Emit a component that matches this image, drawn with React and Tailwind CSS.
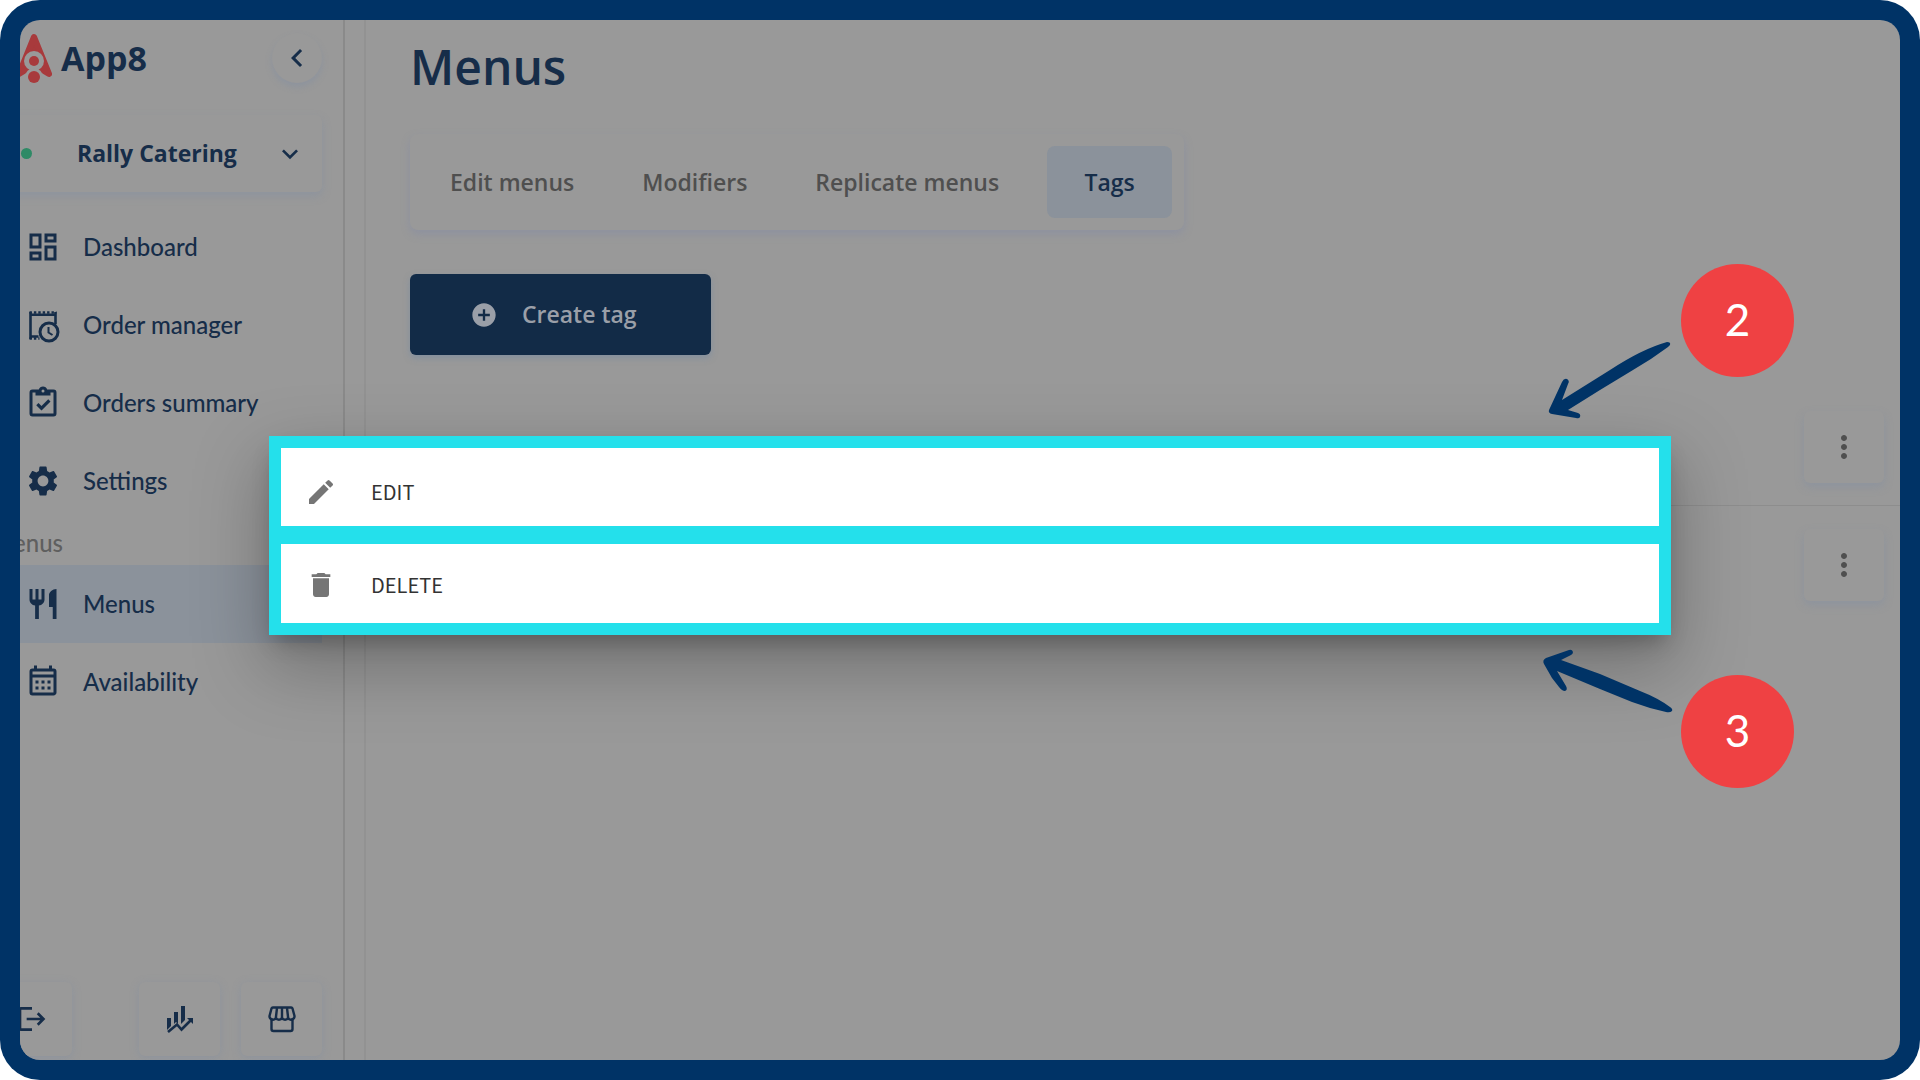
import React from 'react';
import {
  MdAddCircle,
  MdChevronLeft,
  MdDelete,
  MdEdit,
  MdLogout,
  MdMoreVert,
  MdOutlineDashboard,
  MdRestaurant,
  MdSettings,
  MdExpandMore,
} from 'react-icons/md';

const OrderManagerIcon = ({ className }) => (
  <svg className={className} viewBox="0 0 36 36" fill="none" stroke="currentColor">
    <path d="M5.5 5v27M30.5 5v12M4.5 7.8h27M4.5 29.5h9" strokeWidth="2.6" />
    <path d="M4.5 5.5h27M4.5 31.5h10" strokeWidth="2.4" strokeDasharray="2.4 2" />
    <circle cx="24" cy="25" r="9" strokeWidth="3" />
    <path d="M23.5 20v5.5l4 2.5" strokeWidth="2" />
  </svg>
);

const OrdersSummaryIcon = ({ className }) => (
  <svg className={className} viewBox="0 0 24 24" fill="currentColor">
    <path d="M19 3h-4.18C14.4 1.84 13.3 1 12 1c-1.3 0-2.4.84-2.82 2H5a2 2 0 0 0-2 2v14a2 2 0 0 0 2 2h14a2 2 0 0 0 2-2V5a2 2 0 0 0-2-2m-7 0a1 1 0 0 1 1 1 1 1 0 0 1-1 1 1 1 0 0 1-1-1 1 1 0 0 1 1-1M7 7h10V5h2v14H5V5h2v2m.5 6.5L9 12l2 2 4.5-4.5L17 11l-6 6-3.5-3.5Z" />
  </svg>
);

const CalendarIcon = ({ className }) => (
  <svg className={className} viewBox="0 0 24 24" fill="currentColor">
    <path d="M7 11h2v2H7v-2m14-6v14c0 1.11-.89 2-2 2H5a2 2 0 0 1-2-2V5a2 2 0 0 1 2-2h1V1h2v2h8V1h2v2h1a2 2 0 0 1 2 2M5 5v2h14V5H5m14 14V9H5v10h14m-4-6v-2h2v2h-2m-4 0v-2h2v2h-2m-4 2h2v2H7v-2m8 2v-2h2v2h-2m-4 0v-2h2v2h-2Z" />
  </svg>
);

const InsightsIcon = ({ className }) => (
  <svg className={className} viewBox="0 0 32 32" fill="currentColor">
    <path d="M3 15h4v8l-4 4zM10 9h4v12l-2-2-2 2zM17 3h4v14l-4 4z" />
    <path d="M4 29l9-7.5 4.5 5L27 17" fill="none" stroke="currentColor" strokeWidth="2.6" />
    <path d="M23 15h6v6z" />
  </svg>
);

const StorefrontIcon = ({ className }) => (
  <svg className={className} viewBox="0 0 32 32" fill="none" stroke="currentColor" strokeWidth="2.4" strokeLinejoin="round">
    <path d="M5.5 15.5V26a2 2 0 0 0 2 2h17a2 2 0 0 0 2-2V15.5" />
    <path d="M7 4.500h18a1.500 1.500 0 0 1 1.500 1L28.500 13a3.400 3.400 0 0 1-6.400 1.800 3.400 3.400 0 0 1-6.100 0 3.400 3.400 0 0 1-6.100 0A3.400 3.400 0 0 1 3.500 13l2-7.500a1.500 1.500 0 0 1 1.500-1z" />
    <path d="M11 5l-1.100 9.500M16 5v9.500M21 5l1.100 9.500" />
  </svg>
);

const Logo = () => (
  <svg className="w-[38px] h-[50px] shrink-0" viewBox="0 0 38 50">
    <path
      d="M19 4 34 41 19 32 4 41z"
      fill="#a83a3c"
      stroke="#a83a3c"
      strokeWidth="6"
      strokeLinejoin="round"
    />
    <circle cx="19" cy="28" r="10" fill="#999999" />
    <circle cx="19" cy="44" r="9" fill="#999999" />
    <circle cx="19" cy="28" r="5" fill="#a83a3c" />
    <circle cx="19" cy="44" r="6" fill="#a83a3c" />
  </svg>
);

const mainLinks = [
  { label: 'Dashboard', icon: MdOutlineDashboard },
  { label: 'Order manager', icon: OrderManagerIcon },
  { label: 'Orders summary', icon: OrdersSummaryIcon },
  { label: 'Settings', icon: MdSettings },
];

const menuLinks = [
  { label: 'Menus', icon: MdRestaurant, active: true },
  { label: 'Availability', icon: CalendarIcon },
];

const tabs = ['Edit menus', 'Modifiers', 'Replicate menus', 'Tags'];

const NavItem = ({ label, icon: Icon, active }) => (
  <a
    href="#"
    className={`flex h-[78px] items-center gap-[22px] pl-[34px] font-[Lato,sans-serif] text-[24px] font-medium ${active ? 'bg-[#8b929b]' : ''}`}
  >
    <Icon className="w-9 h-9 shrink-0" />
    {label}
  </a>
);

const FooterButton = ({ label, icon: Icon, className = '' }) => (
  <button
    aria-label={label}
    className={`flex h-[74px] w-[81px] items-center justify-center rounded-md bg-[#999999] shadow-[0_2px_8px_rgba(125,140,165,0.4)] ${className}`}
  >
    <Icon className="w-8 h-8" />
  </button>
);

const Sidebar = () => (
  <aside className="-ml-[29px] flex w-[354px] shrink-0 flex-col border-r-2 border-[#8a8a8a] pr-[21px] pb-1">
    <div className="flex items-center justify-between pt-[13px]">
      <div className="flex items-center gap-2 pl-6 text-[34px] leading-[50px] font-bold">
        <Logo />
        App8
      </div>
      <button
        aria-label="Collapse sidebar"
        className="flex h-[50px] w-[50px] items-center justify-center rounded-full shadow-[0_4px_6px_rgba(125,140,165,0.4)]"
      >
        <MdChevronLeft className="w-9 h-9" />
      </button>
    </div>

    <button className="mt-8 flex h-[77px] items-center rounded-md pr-4 pl-[30px] text-[23px] font-bold shadow-[0_4px_8px_rgba(125,140,165,0.4)]">
      <span className="h-[11px] w-[11px] rounded-full bg-[#2f8a66]"></span>
      <span className="ml-[45px]">Rally Catering</span>
      <MdExpandMore className="ml-auto w-8 h-8" />
    </button>

    <nav className="mt-4">
      {mainLinks.map((link) => (
        <NavItem key={link.label} {...link} />
      ))}
      <p className="h-[45px] font-[Lato,sans-serif] text-[24px] leading-[45px] font-medium text-[#5f5f5f]">Menus</p>
      {menuLinks.map((link) => (
        <NavItem key={link.label} {...link} />
      ))}
    </nav>

    <div className="mt-auto flex gap-[21px]">
      <FooterButton label="Log out" icon={MdLogout} />
      <FooterButton label="Insights" icon={InsightsIcon} className="ml-auto" />
      <FooterButton label="Storefront" icon={StorefrontIcon} />
    </div>
  </aside>
);

const TagRow = () => (
  <li className="flex h-[118px] items-center justify-end border-b border-[#8d8d8d] pr-4 last:border-b-0">
    <button
      aria-label="Tag options"
      className="flex h-[72px] w-20 items-center justify-center rounded-md text-[#4f4f4f] shadow-[0_4px_8px_rgba(125,140,165,0.4)]"
    >
      <MdMoreVert className="w-9 h-9" />
    </button>
  </li>
);

const Menus = () => (
  <main className="ml-[19px] min-w-0 flex-1 border-l-2 border-[#929292]">
    <div className="px-11">
      <h1 className="pt-[14px] text-[48px] leading-[66px] font-semibold">Menus</h1>

      <div className="mt-[34px] flex w-fit rounded-lg p-3 shadow-[0_4px_8px_rgba(125,135,170,0.4)]">
        {tabs.map((tab) => (
          <button
            key={tab}
            className={`h-[72px] rounded-lg text-[23px] font-semibold ${
              tab === 'Tags' ? 'ml-2 w-[125px] bg-[#8b929b]' : 'pr-10 pl-7 text-[#4f4f4f]'
            }`}
          >
            {tab}
          </button>
        ))}
      </div>

      <button className="mt-11 flex h-[81px] w-[301px] items-center gap-6 rounded-md bg-[#122b47] pl-[60px] text-[23px] font-semibold text-[#9a9fa8] shadow-[0_3px_6px_rgba(110,135,165,0.5)]">
        <MdAddCircle className="w-7 h-7" />
        Create tag
      </button>
    </div>

    <ul className="mt-[33px]">
      <TagRow />
      <TagRow />
    </ul>
  </main>
);

const TagDialog = () => (
  <div
    role="dialog"
    aria-label="Tag options"
    className="absolute top-[436px] right-[249px] left-[269px] flex flex-col gap-[18px] bg-[#24e0eb] p-3 font-['Noto_Sans_CJK_SC',sans-serif] text-[20px] text-[#333333] shadow-[0_12px_20px_-6px_rgba(0,0,0,0.25),0_28px_70px_6px_rgba(0,0,0,0.25)]"
  >
    <button className="flex h-[78px] items-center gap-[34px] bg-white pt-[10px] pl-6">
      <MdEdit className="w-8 h-8 text-[#757575]" />
      EDIT
    </button>
    <button className="flex h-[79px] items-center gap-[34px] bg-white pt-[2px] pl-6">
      <MdDelete className="w-8 h-8 text-[#757575]" />
      DELETE
    </button>
  </div>
);

const Step = ({ number, className }) => (
  <div
    className={`absolute right-[126px] flex h-[113px] w-[113px] items-center justify-center rounded-full bg-[#ef4143] pb-1 font-[Lato,sans-serif] text-[44px] text-white ${className}`}
  >
    {number}
  </div>
);

const App = () => {
  return (
    <div className="relative flex min-h-screen rounded-[40px] bg-[#003366] p-5 font-['Open_Sans',sans-serif] text-[#162d49]">
      <div className="flex flex-1 overflow-hidden rounded-[20px] bg-[#999999]">
        <Sidebar />
        <Menus />
      </div>

      <TagDialog />

      <svg className="absolute top-[335px] right-[240px] h-[90px] w-[140px]" viewBox="0 0 140 90" fill="#003366">
        <path d="M127 7Q131 7 130 10L128 12Q112 24 93 35L60 55Q44 65 28 75L38 78Q41 79 40 82Q39 84 36 83L12 79Q8 78 9 75L22 47Q24 43 27 44Q30 46 28 49L22 65L70 35Q102 14 127 7Z" />
      </svg>
      <svg className="absolute top-[645px] right-[240px] h-[90px] w-[140px]" viewBox="0 0 140 90" fill="#003366">
        <path d="M6 13L29 5Q32 4 33 7Q33 9 31 10L21 15L60 29L100 46Q118 53 130 62Q133 64 132 66Q130 68 126 67Q108 63 92 57L60 44L17 26L26 41Q28 45 25 46Q22 46 19 42L12 33L4 19Q2 15 6 13Z" />
      </svg>
      <Step number={2} className="top-[264px]" />
      <Step number={3} className="top-[675px]" />
    </div>
  );
};

export default App;
